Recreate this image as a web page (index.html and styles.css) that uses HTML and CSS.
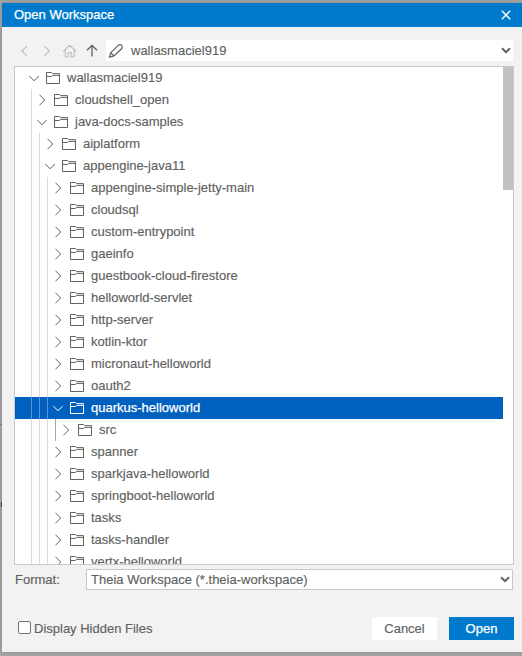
FILE: index.html
```html
<!DOCTYPE html>
<html lang="en">
<head>
<meta charset="utf-8">
<title>Open Workspace</title>
<link rel="stylesheet" href="styles.css">
</head>
<body>
<svg class="symbols" aria-hidden="true">
  <symbol id="right" viewBox="0 0 16 16"><path d="M5.5 2.8 10.7 8l-5.2 5.2"/></symbol>
  <symbol id="down" viewBox="0 0 16 16"><path d="M3.2 6 8 10.7 12.8 6"/></symbol>
  <symbol id="folder" viewBox="0 0 16 16"><path d="M1.5 2.5h5l1.2 1.1h6.8v9.9h-13zM1.5 6.5h4.7l1.5-1.1h6.8"/></symbol>
</svg>
<main class="dialog">
  <header class="title"><span>Open Workspace</span>
    <svg class="close" viewBox="0 0 10 10"><path d="m.8.8 8.4 8.4m0-8.4L.8 9.2"/></svg>
  </header>
  <nav class="navbar">
    <svg class="nav back disabled" viewBox="0 0 16 16"><path d="M10.7 3.2 5.9 8l4.8 4.8"/></svg>
    <svg class="nav forward disabled" viewBox="0 0 16 16"><path d="M5.5 3.2 10.3 8l-4.8 4.8"/></svg>
    <svg class="nav home disabled" viewBox="0 0 16 16"><path d="M1.2 8.3 7.7 2.3l6.5 6M3.2 6.8v6.9h3V9.5h3v4.2h3V6.8"/></svg>
    <svg class="nav up" viewBox="0 0 16 16"><path d="M8 13.5v-11M3 7.3l5-4.9 5 4.9"/></svg>
    <div class="location">
      <svg class="pencil" viewBox="0 0 16 16"><path d="m1.4 14.2 1.3-4.5 7.8-7.6q1.7-1.2 3.1.3 1.4 1.5.2 3.1L6 12.9zM2.7 9.7 6 12.9"/></svg>
      <span>wallasmaciel919</span>
      <svg class="caret" viewBox="0 0 10 7"><path d="m1 1.3 4 3.8 4-3.8"/></svg>
    </div>
  </nav>
  <section class="tree">
    <div class="rows" id="rows"></div>
    <div class="scrollbar"><div class="thumb"></div></div>
  </section>
  <div class="format">
    <span class="label">Format:</span>
    <div class="select"><span>Theia Workspace (*.theia-workspace)</span>
      <svg class="caret" viewBox="0 0 10 7"><path d="m1 1.3 4 3.8 4-3.8"/></svg>
    </div>
  </div>
  <footer class="actions">
    <span class="checkbox"></span><span class="hidden-label">Display Hidden Files</span>
    <button class="button">Cancel</button>
    <button class="button primary">Open</button>
  </footer>
</main>
<script src="tree.js"></script>
</body>
</html>
```
FILE: styles.css
```css
* { box-sizing: border-box; }
body {
  margin: 0;
  height: 656px;
  padding: 3px 0 4px 2px;
  overflow: hidden;
  background:
    linear-gradient(#858585, #858585) 0 424px / 2px 1px no-repeat,
    linear-gradient(#4a4a4a, #4a4a4a) 1px 502px / 1px 5px no-repeat,
    #a7a7a7;
  color: #616161;
  font: 13px/22px "Liberation Sans", Arial, sans-serif;
  -webkit-text-stroke: .15px;
}
svg { flex: none; fill: none; stroke: currentColor; }
.symbols { display: none; }
.dialog {
  display: flex;
  flex-direction: column;
  height: 649px;
  background: #f2f2f2;
  box-shadow: 0 0 6px rgba(0, 0, 0, .2);
}
.title {
  display: flex;
  align-items: center;
  justify-content: space-between;
  height: 24px;
  padding: 0 11px 0 12px;
  background: #007acc;
  color: #fff;
  -webkit-text-stroke: .25px;
}
.close { width: 10px; height: 10px; stroke-width: 1.4; }
.navbar {
  display: flex;
  align-items: center;
  height: 21px;
  margin: 13px 9px 5px 14px;
}
.nav { width: 16px; height: 16px; margin-right: 7px; stroke-width: 1.1; }
.nav.home { margin-right: 6px; }
.nav.up { margin-right: 6px; stroke-width: 1.3; }
.disabled { color: #bcbcbc; }
.location {
  display: flex;
  flex: 1;
  align-items: center;
  height: 21px;
  padding: 0 2px;
  background: #fff;
}
.pencil { width: 16px; height: 16px; margin-right: 7px; stroke-width: 1.2; }
.caret { width: 10px; height: 7px; margin-left: auto; stroke-width: 2; }
.tree {
  display: flex;
  height: 499px;
  margin: 0 8px 0 12px;
  border: 1px solid #c8c8c8;
  background: #fff;
  overflow: hidden;
}
.rows { flex: 1; }
.row { display: flex; align-items: center; height: 22px; padding-left: 16px; }
.guide { width: 8px; height: 22px; border-left: 1px solid #d9d9d9; }
.guide.active { border-color: #a5a5a5; }
.toggle { width: 16px; height: 16px; margin: 0 3px 0 -5px; }
.folder { width: 16px; height: 16px; margin-right: 6px; }
.row.selected { background: #0060c0; color: #fff; -webkit-text-stroke: .25px; }
.selected .guide { border-color: #5c98d6; }
.scrollbar { width: 10px; }
.thumb { height: 123px; background: #c1c1c1; }
.format { display: flex; height: 21px; margin: 4px 9px 0 13px; line-height: 21px; }
.label { width: 71px; }
.select {
  display: flex;
  flex: 1;
  align-items: center;
  padding: 0 2px 0 4px;
  border: 1px solid #c8c8c8;
  background: #fff;
}
.actions { display: flex; align-items: center; height: 23px; margin: 27px 8px 0 16px; }
.checkbox {
  width: 13px;
  height: 13px;
  margin: 0 3px 2px 0;
  border: 1px solid #767676;
  border-radius: 2px;
  background: #fff;
}
.hidden-label { margin-right: auto; }
.button {
  width: 65px;
  height: 23px;
  margin-left: 12px;
  padding: 0;
  border: 0;
  background: #fff;
  color: inherit;
  font: inherit;
}
.button.primary { background: #007acc; color: #fff; -webkit-text-stroke: .25px; }
```
FILE: tree.js
```js
const items = [
  [0, "wallasmaciel919", true],
  [1, "cloudshell_open"],
  [1, "java-docs-samples", true],
  [2, "aiplatform"],
  [2, "appengine-java11", true],
  [3, "appengine-simple-jetty-main"],
  [3, "cloudsql"],
  [3, "custom-entrypoint"],
  [3, "gaeinfo"],
  [3, "guestbook-cloud-firestore"],
  [3, "helloworld-servlet"],
  [3, "http-server"],
  [3, "kotlin-ktor"],
  [3, "micronaut-helloworld"],
  [3, "oauth2"],
  [3, "quarkus-helloworld", true, true],
  [4, "src"],
  [3, "spanner"],
  [3, "sparkjava-helloworld"],
  [3, "springboot-helloworld"],
  [3, "tasks"],
  [3, "tasks-handler"],
  [3, "vertx-helloworld"]
];

document.getElementById("rows").innerHTML = items.map(([depth, name, open, selected]) => {
  let guides = "";
  for (let i = 0; i < depth; i++) {
    guides += `<span class="guide${i === 3 ? " active" : ""}"></span>`;
  }
  return `<div class="row${selected ? " selected" : ""}">${guides}` +
    `<svg class="toggle"><use href="#${open ? "down" : "right"}"/></svg>` +
    `<svg class="folder"><use href="#folder"/></svg><span>${name}</span></div>`;
}).join("");
```
